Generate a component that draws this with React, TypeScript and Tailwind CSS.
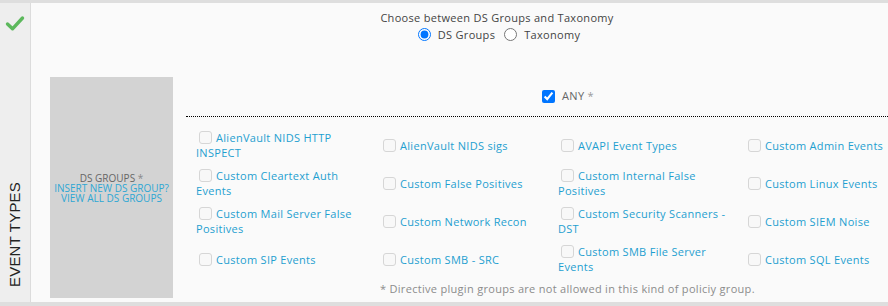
import React from 'react'

const groups = [
  'AlienVault NIDS HTTP INSPECT',
  'AlienVault NIDS sigs',
  'AVAPI Event Types',
  'Custom Admin Events',
  'Custom Cleartext Auth Events',
  'Custom False Positives',
  'Custom Internal False Positives',
  'Custom Linux Events',
  'Custom Mail Server False Positives',
  'Custom Network Recon',
  'Custom Security Scanners - DST',
  'Custom SIEM Noise',
  'Custom SIP Events',
  'Custom SMB - SRC',
  'Custom SMB File Server Events',
  'Custom SQL Events',
]

function Box() {
  return (
    <span className="inline-block align-[-2px] w-[13px] h-[13px] rounded-[3px] border border-[#d6d6d6] bg-[#f8f8f8] mr-[4px] ml-[3px]" />
  )
}

export default function App() {
  return (
    <div
      className="w-[888px] h-[306px] bg-[#fafafa] border-t-[3px] border-b-[4px] border-[#dedede] flex text-[#555]"
      style={{ fontFamily: '"Open Sans", "DejaVu Sans", sans-serif' }}
    >
      {/* left strip */}
      <div className="w-[31px] bg-[#eeeeee] border-r border-[#dcdcdc] flex flex-col items-center justify-between pt-[12px] pb-[16px]">
        <svg width="20" height="17" viewBox="0 0 20 17">
          <path d="M2.5 9 L7.5 13.8 L17.5 3" fill="none" stroke="#5cb85c" strokeWidth="3.4" strokeLinecap="round" strokeLinejoin="round" />
        </svg>
        <div className="w-[16px] h-[104px] flex items-center justify-center">
          <span className="-rotate-90 whitespace-nowrap text-[15px] text-[#222] leading-none tracking-[0.2px]" style={{ fontFamily: '"Liberation Sans", Arial, sans-serif' }}>
            EVENT TYPES
          </span>
        </div>
      </div>

      {/* main */}
      <div className="flex-1 flex flex-col">
        <div className="text-center text-[11px] leading-[17px] pt-[6px] pl-[75px] text-[#444] tracking-[0.3px]">
          <div>Choose between DS Groups and Taxonomy</div>
          <div className="flex justify-center items-center ml-[4px]">
            <input type="radio" defaultChecked name="t" className="w-[13px] h-[13px] accent-[#0075ff] m-0 mr-[7px]" />
            <span className="mr-[9px]">DS Groups</span>
            <input type="radio" name="t" className="w-[13px] h-[13px] m-0 mr-[7px]" />
            <span>Taxonomy</span>
          </div>
        </div>

        <div className="flex mt-[34px] ml-[19px]">
          <div className="w-[123px] h-[221px] bg-[#d3d3d3] flex flex-col items-center justify-center text-[10px] leading-[10px] text-center pt-[1px]">
            <div className="text-[#666]">DS GROUPS <span className="text-[#888]">*</span></div>
            <div className="text-[#2ea7d3]">INSERT NEW DS GROUP?</div>
            <div className="text-[#2ea7d3]">VIEW ALL DS GROUPS</div>
          </div>

          <div className="flex-1 ml-[13px] flex flex-col">
            <div className="h-[40px] border-b border-dotted border-black flex items-center justify-center gap-[7px] pl-[62px]">
              <input type="checkbox" defaultChecked className="w-[13px] h-[13px] accent-[#0075ff] m-0" />
              <span className="text-[11px] text-[#666] tracking-[0.3px]">ANY <span className="text-[#999]">*</span></span>
            </div>

            <div className="grid grid-cols-[184px_178px_187px_143px] pl-[10px] pt-[9px] text-[11px] leading-[15px] text-[#1e9fd0] tracking-[0.3px]">
              {groups.map((g, i) => (
                <div key={g} className={i % 4 === 3 ? 'h-[38px] flex items-center' : 'h-[38px] flex items-center pr-[8px]'}>
                  <div>
                    <Box />
                    {g}
                  </div>
                </div>
              ))}
            </div>

            <div className="text-[11px] text-[#8c8c8c] leading-[15px] mt-[3px] pl-[194px] tracking-[0.3px]">
              * Directive plugin groups are not allowed in this kind of policiy group.
            </div>
          </div>
        </div>
      </div>
    </div>
  )
}
